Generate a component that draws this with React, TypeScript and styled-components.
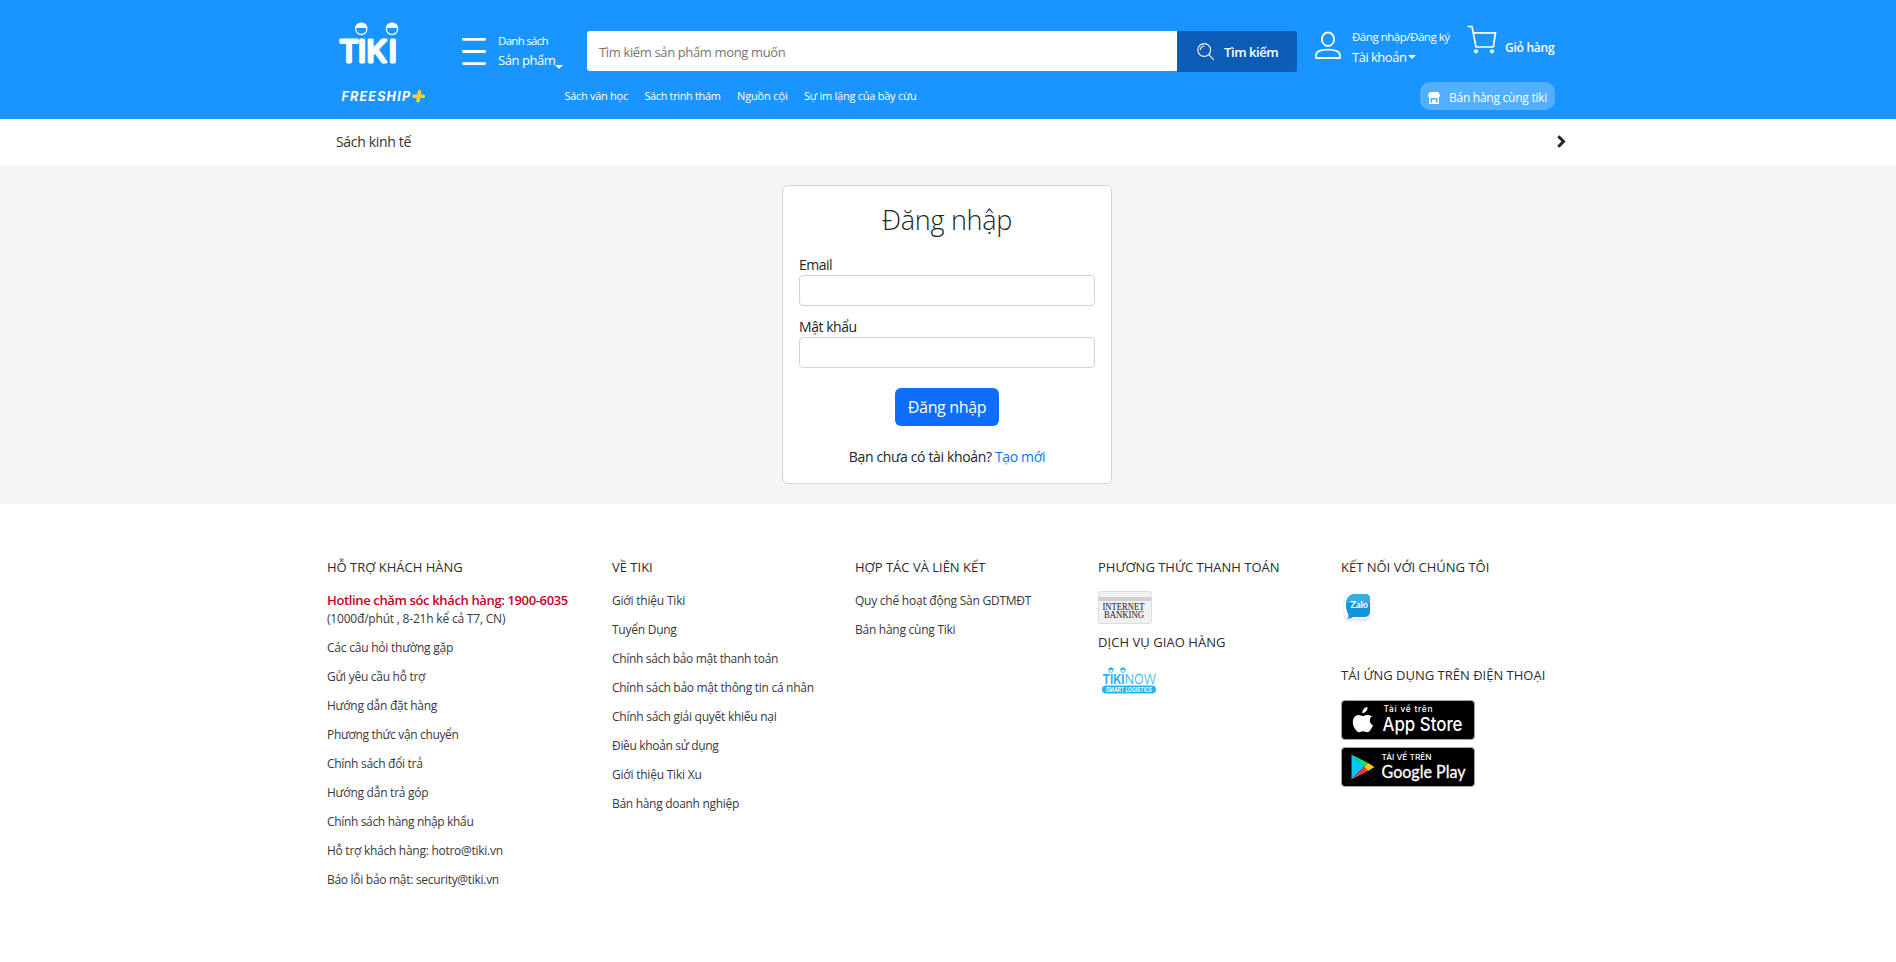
import React from "react";
import styled, { createGlobalStyle, css } from "styled-components";

const Global = createGlobalStyle`
  *, *::before, *::after { box-sizing: border-box; }
  html, body { margin: 0; padding: 0; }
  body { background: #fff; color: #212529; font-family: "Open Sans", "Noto Sans", sans-serif; font-size: 14px; overflow-x: hidden; }
  svg { display: block; flex: none; overflow: visible; }
`;

const T = styled.span<{ $ls?: number }>`
  white-space: nowrap;
  letter-spacing: ${(p) => p.$ls ?? 0}px;
`;

const Header = styled.header`
  height: 119px;
  background: #1a94ff;
  color: #fff;
  padding-left: 339px;
`;
const TopRow = styled.div`
  display: flex;
  align-items: flex-start;
  height: 82px;
`;
const LogoLink = styled.a`
  margin-top: 22px;
  width: 123px;
`;
const Menu = styled.div`
  display: flex;
  gap: 12px;
  width: 125px;
  margin-top: 31px;
`;
const Stack = styled.div`
  display: flex;
  flex-direction: column;
`;
const Line = styled.div<{ $size: number; $h: number; $weight?: number }>`
  display: flex;
  align-items: center;
  font-size: ${(p) => p.$size}px;
  height: ${(p) => p.$h}px;
  line-height: ${(p) => p.$h}px;
  font-weight: ${(p) => p.$weight ?? 400};
`;
const Caret = styled.i<{ $drop?: number; $gap?: number }>`
  border: 4px solid transparent;
  border-top-color: #fff;
  border-bottom: 0;
  margin: ${(p) => p.$drop ?? 0}px 0 0 ${(p) => p.$gap ?? 0}px;
`;
const Search = styled.form`
  display: flex;
  margin: 31px 18px 0 0;
`;
const SearchBox = styled.label`
  display: flex;
  align-items: center;
  width: 590px;
  height: 40px;
  padding: 2px 0 0 12px;
  background: #fff;
  border-radius: 3px 0 0 3px;
  color: #757575;
  font-size: 13px;
`;
const SearchButton = styled.button`
  display: flex;
  align-items: center;
  gap: 10px;
  width: 120px;
  height: 41px;
  padding: 0 0 0 20px;
  border: 0;
  border-radius: 0 2px 2px 0;
  background: #0d5cb6;
  color: #fff;
  font: 600 13px "Open Sans", sans-serif;
`;
const Account = styled.div`
  display: flex;
  gap: 11px;
  width: 152px;
  margin-top: 28px;
`;
const Cart = styled.div`
  display: flex;
  gap: 8px;
  margin-top: 25px;
`;
const SubRow = styled.div`
  display: flex;
  align-items: flex-start;
  width: 1216px;
`;
const FreeShip = styled.a`
  width: 225.5px;
  padding: 7px 0 0 2px;
`;
const QuickLinks = styled.nav`
  display: flex;
  gap: 16.5px;
  flex: 1;
  padding-top: 4px;
  font-size: 11px;
  line-height: 20px;
`;
const SellPill = styled.a`
  display: flex;
  align-items: center;
  gap: 9px;
  width: 135px;
  height: 28px;
  padding: 3px 0 0 8px;
  border-radius: 10px;
  background: #53afff;
  font-size: 12px;
`;
const CategoryBar = styled.nav`
  display: flex;
  align-items: center;
  justify-content: space-between;
  height: 46px;
  padding: 0 330px 1px 336px;
  color: #333;
  font-size: 14px;
`;
const Main = styled.main`
  display: flex;
  justify-content: center;
  height: 339px;
  padding: 20px 2px 0 0;
  background: #f5f5f5;
`;
const Card = styled.form`
  display: flex;
  flex-direction: column;
  width: 330px;
  height: 299px;
  padding: 14px 16px 0;
  border: 1px solid #d2d3d4;
  border-radius: 6px;
  background: #fff;
`;
const Title = styled.h1`
  margin: 0 0 14px;
  font-size: 27px;
  line-height: 40px;
  font-weight: 300;
  text-align: center;
`;
const Field = styled.label`
  display: flex;
  flex: none;
  flex-direction: column;
  line-height: 21px;
  height: 62px;
`;
const Input = styled.input`
  height: 31px;
  border: 1px solid #ced4da;
  border-radius: 4px;
  background: #fff;
`;
const Submit = styled.button`
  align-self: center;
  width: 104px;
  height: 38px;
  flex: none;
  margin-top: 10px;
  padding: 0;
  border: 0;
  border-radius: 6px;
  background: #0d6efd;
  color: #fff;
  font: 400 16px "Open Sans", sans-serif;
`;
const Hint = styled.p`
  margin: 20px 0 0;
  line-height: 22px;
  text-align: center;
`;
const Create = styled.a`
  color: #0d6efd;
`;

const Footer = styled.footer`
  display: grid;
  grid-template-columns: 285px 243px 243px 243px 243px;
  padding: 52px 0 0 327px;
  color: #38383d;
`;
const Column = styled.section`
  display: flex;
  flex-direction: column;
  align-items: flex-start;
`;
const Heading = styled.h4`
  margin: 0;
  height: 22px;
  line-height: 22px;
  font-size: 13px;
  font-weight: 500;
  color: #2b2b30;
`;
const List = styled.ul`
  list-style: none;
  margin: 12px 0 0;
  padding: 0;
  font-size: 12px;
`;
const Item = styled.li<{ $hot?: boolean }>`
  height: 29px;
  line-height: 22px;
  &:last-child {
    line-height: 21px;
  }
  ${(p) =>
    p.$hot &&
    css`
      height: 18px;
      line-height: 21px;
      color: #c6002b;
      font-size: 13px;
      font-weight: 600;
    `}
`;
const Bank = styled.div`
  width: 54px;
  height: 33px;
  margin: 13px 0 7px;
  border: 1px solid #ddd;
  border-radius: 3px;
  background: linear-gradient(#f1f1f1 5px, #d0d0d0 5px, #d0d0d0 9px, #f1f1f1 9px);
`;
const Slot = styled.div<{ $top: number; $left?: number; $bottom?: number }>`
  margin: ${(p) => p.$top}px 0 ${(p) => p.$bottom ?? 0}px ${(p) => p.$left ?? 0}px;
`;
const Badge = styled.a<{ $top: number; $px: number }>`
  display: flex;
  align-items: center;
  gap: ${(p) => p.$px}px;
  width: 134px;
  height: 40px;
  margin-top: ${(p) => p.$top}px;
  padding-left: 9px;
  border: 1px solid #a6a6a6;
  border-radius: 4px;
  background: #000;
`;

const TikiLogo = () => (
  <svg width="62" height="44" viewBox="0 0 62 44">
    <text
      x="0.300 19 27.500 49.800"
      y="39.800"
      fontFamily="Inter"
      fontWeight="400"
      fontSize="30"
      fill="#fff"
      stroke="#fff"
      strokeWidth="3"
      strokeLinejoin="round"
    >
      TIKI
    </text>
    {[22.3, 53].map((x) => (
      <g key={x}>
        <circle cx={x} cy="7" r="5.6" fill="#1a94ff" stroke="#fff" strokeWidth="1.2" />
        <path d={`M${x - 6} 6a6 5.500 0 0 1 12 0z`} fill="#fff" />
      </g>
    ))}
  </svg>
);

type Entry = [text: string, spacing: number];

const support: Entry[] = [
  ["Các câu hỏi thường gặp", -0.23],
  ["Gửi yêu cầu hỗ trợ", -0.28],
  ["Hướng dẫn đặt hàng", -0.27],
  ["Phương thức vận chuyển", -0.34],
  ["Chính sách đổi trả", -0.3],
  ["Hướng dẫn trả góp", -0.25],
  ["Chính sách hàng nhập khẩu", -0.34],
  ["Hỗ trợ khách hàng: hotro@tiki.vn", -0.27],
  ["Báo lỗi bảo mật: security@tiki.vn", -0.29],
];
const about: Entry[] = [
  ["Giới thiệu Tiki", -0.2],
  ["Tuyển Dụng", -0.25],
  ["Chính sách bảo mật thanh toán", -0.33],
  ["Chính sách bảo mật thông tin cá nhân", -0.28],
  ["Chính sách giải quyết khiếu nại", -0.26],
  ["Điều khoản sử dụng", -0.33],
  ["Giới thiệu Tiki Xu", -0.22],
  ["Bán hàng doanh nghiệp", -0.3],
];
const partners: Entry[] = [
  ["Quy chế hoạt động Sàn GDTMĐT", -0.24],
  ["Bán hàng cùng Tiki", -0.26],
];
const quick: Entry[] = [
  ["Sách văn học", -0.29],
  ["Sách trinh thám", -0.36],
  ["Nguồn cội", -0.15],
  ["Sự im lặng của bầy cừu", -0.25],
];

const Items = ({ of }: { of: Entry[] }) => (
  <>
    {of.map(([t, ls]) => (
      <Item key={t}>
        <T $ls={ls}>{t}</T>
      </Item>
    ))}
  </>
);

export default function App() {
  return (
    <>
      <Global />
      <Header>
        <TopRow>
          <LogoLink><TikiLogo /></LogoLink>
          <Menu>
            <svg width="24" height="36" viewBox="0 0 24 36" stroke="#fff" strokeWidth="2.8" strokeLinecap="round">
              <path d="M1.4 8.3h21.2M1.4 20.5h21.2M1.4 32.6h21.2" />
            </svg>
            <Stack>
              <Line $size={11.5} $h={20}><T $ls={-0.7}>Danh sách</T></Line>
              <Line $size={13} $h={19}><T $ls={-0.45}>Sản phẩm</T><Caret $drop={13} /></Line>
            </Stack>
          </Menu>
          <Search>
            <SearchBox><T $ls={-0.36}>Tìm kiếm sản phẩm mong muốn</T></SearchBox>
            <SearchButton type="button">
              <svg width="17" height="18" viewBox="0 0 17 18" fill="none" stroke="#fff" strokeWidth="1.1">
                <circle cx="7.2" cy="7" r="6.4" />
                <path d="M11.8 11.7l4.800 5M3.3 7a4 4 0 0 1 4-4" />
              </svg>
              <T $ls={-0.42}>Tìm kiếm</T>
            </SearchButton>
          </Search>
          <Account>
            <svg width="26" height="32" viewBox="0 0 26 32" fill="none" stroke="#fff" strokeWidth="1.8">
              <ellipse cx="13" cy="11.2" rx="6.1" ry="6.8" />
              <path d="M1 30v-2.500C1 23.500 6 21.600 13 21.600s12 1.900 12 5.900V30z" strokeLinejoin="round" />
            </svg>
            <Stack>
              <Line $size={11.5} $h={18}><T $ls={-0.47}>Đăng nhập/Đăng ký</T></Line>
              <Line $size={13} $h={22}><T $ls={-0.5}>Tài khoản</T><Caret $gap={1.5} /></Line>
            </Stack>
          </Account>
          <Cart>
            <svg width="30" height="30" viewBox="0 0 30 30" fill="none" stroke="#fff" strokeWidth="1.7">
              <path d="M0.500 1.500h4.500L9 22h17.500M6.500 7.800h22L26.300 22" />
              <circle cx="9" cy="26.300" r="2.100" fill="#fff" stroke="none" />
              <circle cx="25" cy="26.300" r="2.100" fill="#fff" stroke="none" />
            </svg>
            <Line $size={12} $h={46} $weight={600}><T $ls={-0.25}>Giỏ hàng</T></Line>
          </Cart>
        </TopRow>
        <SubRow>
          <FreeShip>
            <svg width="86" height="15" viewBox="0 0 86 15">
              <text x="0.500" y="12" fontFamily="Inter" fontStyle="italic" fontWeight="700" fontSize="12.500" fill="#fff" textLength="68.500">FREESHIP</text>
              <path d="M78.600 2.800l-1.600 9M73 7.300h9.300" stroke="#ffd021" strokeWidth="3.600" strokeLinecap="round" />
            </svg>
          </FreeShip>
          <QuickLinks>{quick.map(([t, ls]) => <T key={t} $ls={ls}>{t}</T>)}</QuickLinks>
          <SellPill>
            <svg width="12" height="12" viewBox="0 0 12 12" fill="#fff">
              <path d="M1.500 0h9L12 3.500c0 1-.6 1.700-1.500 1.700C9.700 5.200 9 4.900 9 4.200c0 .7-.7 1-1.500 1S6 4.900 6 4.200c0 .7-.7 1-1.500 1S3 4.900 3 4.200c0 .7-.7 1-1.500 1C.6 5.200 0 4.500 0 3.500z" />
              <path fillRule="evenodd" d="M1 5h10v7H1zM2.600 6v4.800h1.500V7.500h3.800v3.300h1.500V6z" />
            </svg>
            <T $ls={-0.26}>Bán hàng cùng tiki</T>
          </SellPill>
        </SubRow>
      </Header>
      <CategoryBar>
        <T $ls={-0.33}>Sách kinh tế</T>
        <svg width="9" height="13" viewBox="0 0 9 13" fill="none" stroke="#212529" strokeWidth="3"><path d="M1.300 1.300L6.500 6.500l-5.200 5.200" /></svg>
      </CategoryBar>
      <Main>
        <Card>
          <Title><T $ls={-0.3}>Đăng nhập</T></Title>
          <Field><div><T $ls={-0.5}>Email</T></div><Input type="text" /></Field>
          <Field><div><T $ls={-0.45}>Mật khẩu</T></div><Input type="password" /></Field>
          <Submit type="button"><T $ls={-0.35}>Đăng nhập</T></Submit>
          <Hint><T $ls={-0.35}>Bạn chưa có tài khoản? <Create>Tạo mới</Create></T></Hint>
        </Card>
      </Main>
      <Footer>
        <Column>
          <Heading><T>HỖ TRỢ KHÁCH HÀNG</T></Heading>
          <List>
            <Item $hot><T $ls={-0.36}>Hotline chăm sóc khách hàng: 1900-6035</T></Item>
            <Item><T $ls={-0.2}>(1000đ/phút , 8-21h kể cả T7, CN)</T></Item>
            <Items of={support} />
          </List>
        </Column>
        <Column>
          <Heading><T>VỀ TIKI</T></Heading>
          <List><Items of={about} /></List>
        </Column>
        <Column>
          <Heading><T>HỢP TÁC VÀ LIÊN KẾT</T></Heading>
          <List><Items of={partners} /></List>
        </Column>
        <Column>
          <Heading><T>PHƯƠNG THỨC THANH TOÁN</T></Heading>
          <Bank>
            <svg width="52" height="31" viewBox="0 0 52 31" fontFamily="Liberation Serif" fontSize="10.500" fill="#222">
              <text x="3.500" y="18" textLength="42" lengthAdjust="spacingAndGlyphs">INTERNET</text>
              <text x="5" y="26" textLength="40" lengthAdjust="spacingAndGlyphs">BANKING</text>
            </svg>
          </Bank>
          <Heading><T $ls={0.05}>DỊCH VỤ GIAO HÀNG</T></Heading>
          <Slot $top={14} $left={4}>
            <svg width="54" height="27" viewBox="0 0 54 27" fontFamily="Inter" fill="#29b3f0">
              <text x="0.500" y="16.500" fontSize="13.500" fontWeight="700" textLength="22" lengthAdjust="spacingAndGlyphs">TIKI</text>
              <text x="22.500" y="16.500" fontSize="13.500" fontWeight="300" textLength="31.500" lengthAdjust="spacingAndGlyphs">NOW</text>
              {[9, 21].map((x) => (
                <g key={x}>
                  <circle cx={x} cy="3.200" r="2.200" fill="#fff" stroke="#29b3f0" strokeWidth="0.900" />
                  <path d={`M${x - 2.6} 3a2.600 2.600 0 0 1 5.200 0z`} />
                </g>
              ))}
              <rect y="18.600" width="54" height="8" rx="4" />
              <text x="4" y="24.800" fontSize="6" fontWeight="600" fill="#fff" textLength="46" lengthAdjust="spacingAndGlyphs">SMART LOGISTICS</text>
            </svg>
          </Slot>
        </Column>
        <Column>
          <Heading><T>KẾT NỐI VỚI CHÚNG TÔI</T></Heading>
          <Slot $top={15} $left={2} $bottom={42}>
            <svg width="28" height="29" viewBox="0 0 28 29">
              <rect x="0.500" y="0.800" width="27" height="27.400" rx="6" fill="#e8eaec" />
              <rect x="1.200" y="1" width="25" height="25" rx="6" fill="#fff" />
              <path d="M10 1h12q5 0 5 5v12q0 6-6 6H10q-2 2-6 1.500 2-2 1.500-4Q3 18 3 12 3 3 10 1z" fill="#1292d8" />
              <path d="M10 1h12q5 0 5 5v4H3.200Q4 3 10 1z" fill="#3fa9e4" />
              <text x="7.500" y="15" fontFamily="Lato" fontWeight="900" fontSize="9" fill="#fff" textLength="17.500" lengthAdjust="spacingAndGlyphs">Zalo</text>
            </svg>
          </Slot>
          <Heading><T>TẢI ỨNG DỤNG TRÊN ĐIỆN THOẠI</T></Heading>
          <Badge $top={14} $px={7}>
            <svg width="24" height="28" viewBox="0 0 24 28" fill="#fff">
              <path d="M16.500 1c.2 1.700-.5 3.200-1.400 4.300-1 1.100-2.400 1.900-3.800 1.800-.2-1.600.6-3.200 1.500-4.200C13.800 1.800 15.300 1.100 16.500 1zM21.500 10c-1.700 1-2.700 2.500-2.700 4.400 0 2.200 1.300 3.900 3.200 4.700-.4 1.400-1.200 2.900-2.200 4.300-1 1.400-2 2.800-3.700 2.800-1.600 0-2.100-1-4-1s-2.500 1-4 1c-1.600.1-2.800-1.500-3.800-2.900C2.200 20.500.8 15.500 2.800 12c1-1.800 2.900-3 4.900-3 1.600 0 3 1.100 4 1.100.9 0 2.700-1.300 4.600-1.100 1.600 0 3.900.5 5.200 2z" />
            </svg>
            <svg width="82" height="38" viewBox="0 0 82 38" fill="#fff" fontFamily="Inter">
              <text x="1.500" y="10.600" fontSize="8.300" fontWeight="500" textLength="49">Tải về trên</text>
              <text x="0.500" y="29.500" fontSize="18.500" fontWeight="500" textLength="80" lengthAdjust="spacingAndGlyphs">App Store</text>
            </svg>
          </Badge>
          <Badge $top={7} $px={6}>
            <svg width="24" height="26" viewBox="0 0 24 26">
              <path d="M.5.500v25l12.500-12.500z" fill="#00c8ff" />
              <path d="M.5.500L13 13l4-4z" fill="#00e676" />
              <path d="M.5 25.500L13 13l4 4z" fill="#f0354b" />
              <path d="M17 9l6.500 4L17 17l-4-4z" fill="#ffc800" />
            </svg>
            <svg width="86" height="38" viewBox="0 0 86 38" fill="#fff">
              <text x="0.500" y="12" fontFamily="Inter" fontSize="7.800" fontWeight="500" textLength="50" lengthAdjust="spacingAndGlyphs">TẢI VỀ TRÊN</text>
              <text x="0.500" y="30" fontFamily="Lato" fontSize="18" fontWeight="400" stroke="#fff" strokeWidth="0.300" textLength="84" lengthAdjust="spacingAndGlyphs">Google Play</text>
            </svg>
          </Badge>
        </Column>
      </Footer>
    </>
  );
}
